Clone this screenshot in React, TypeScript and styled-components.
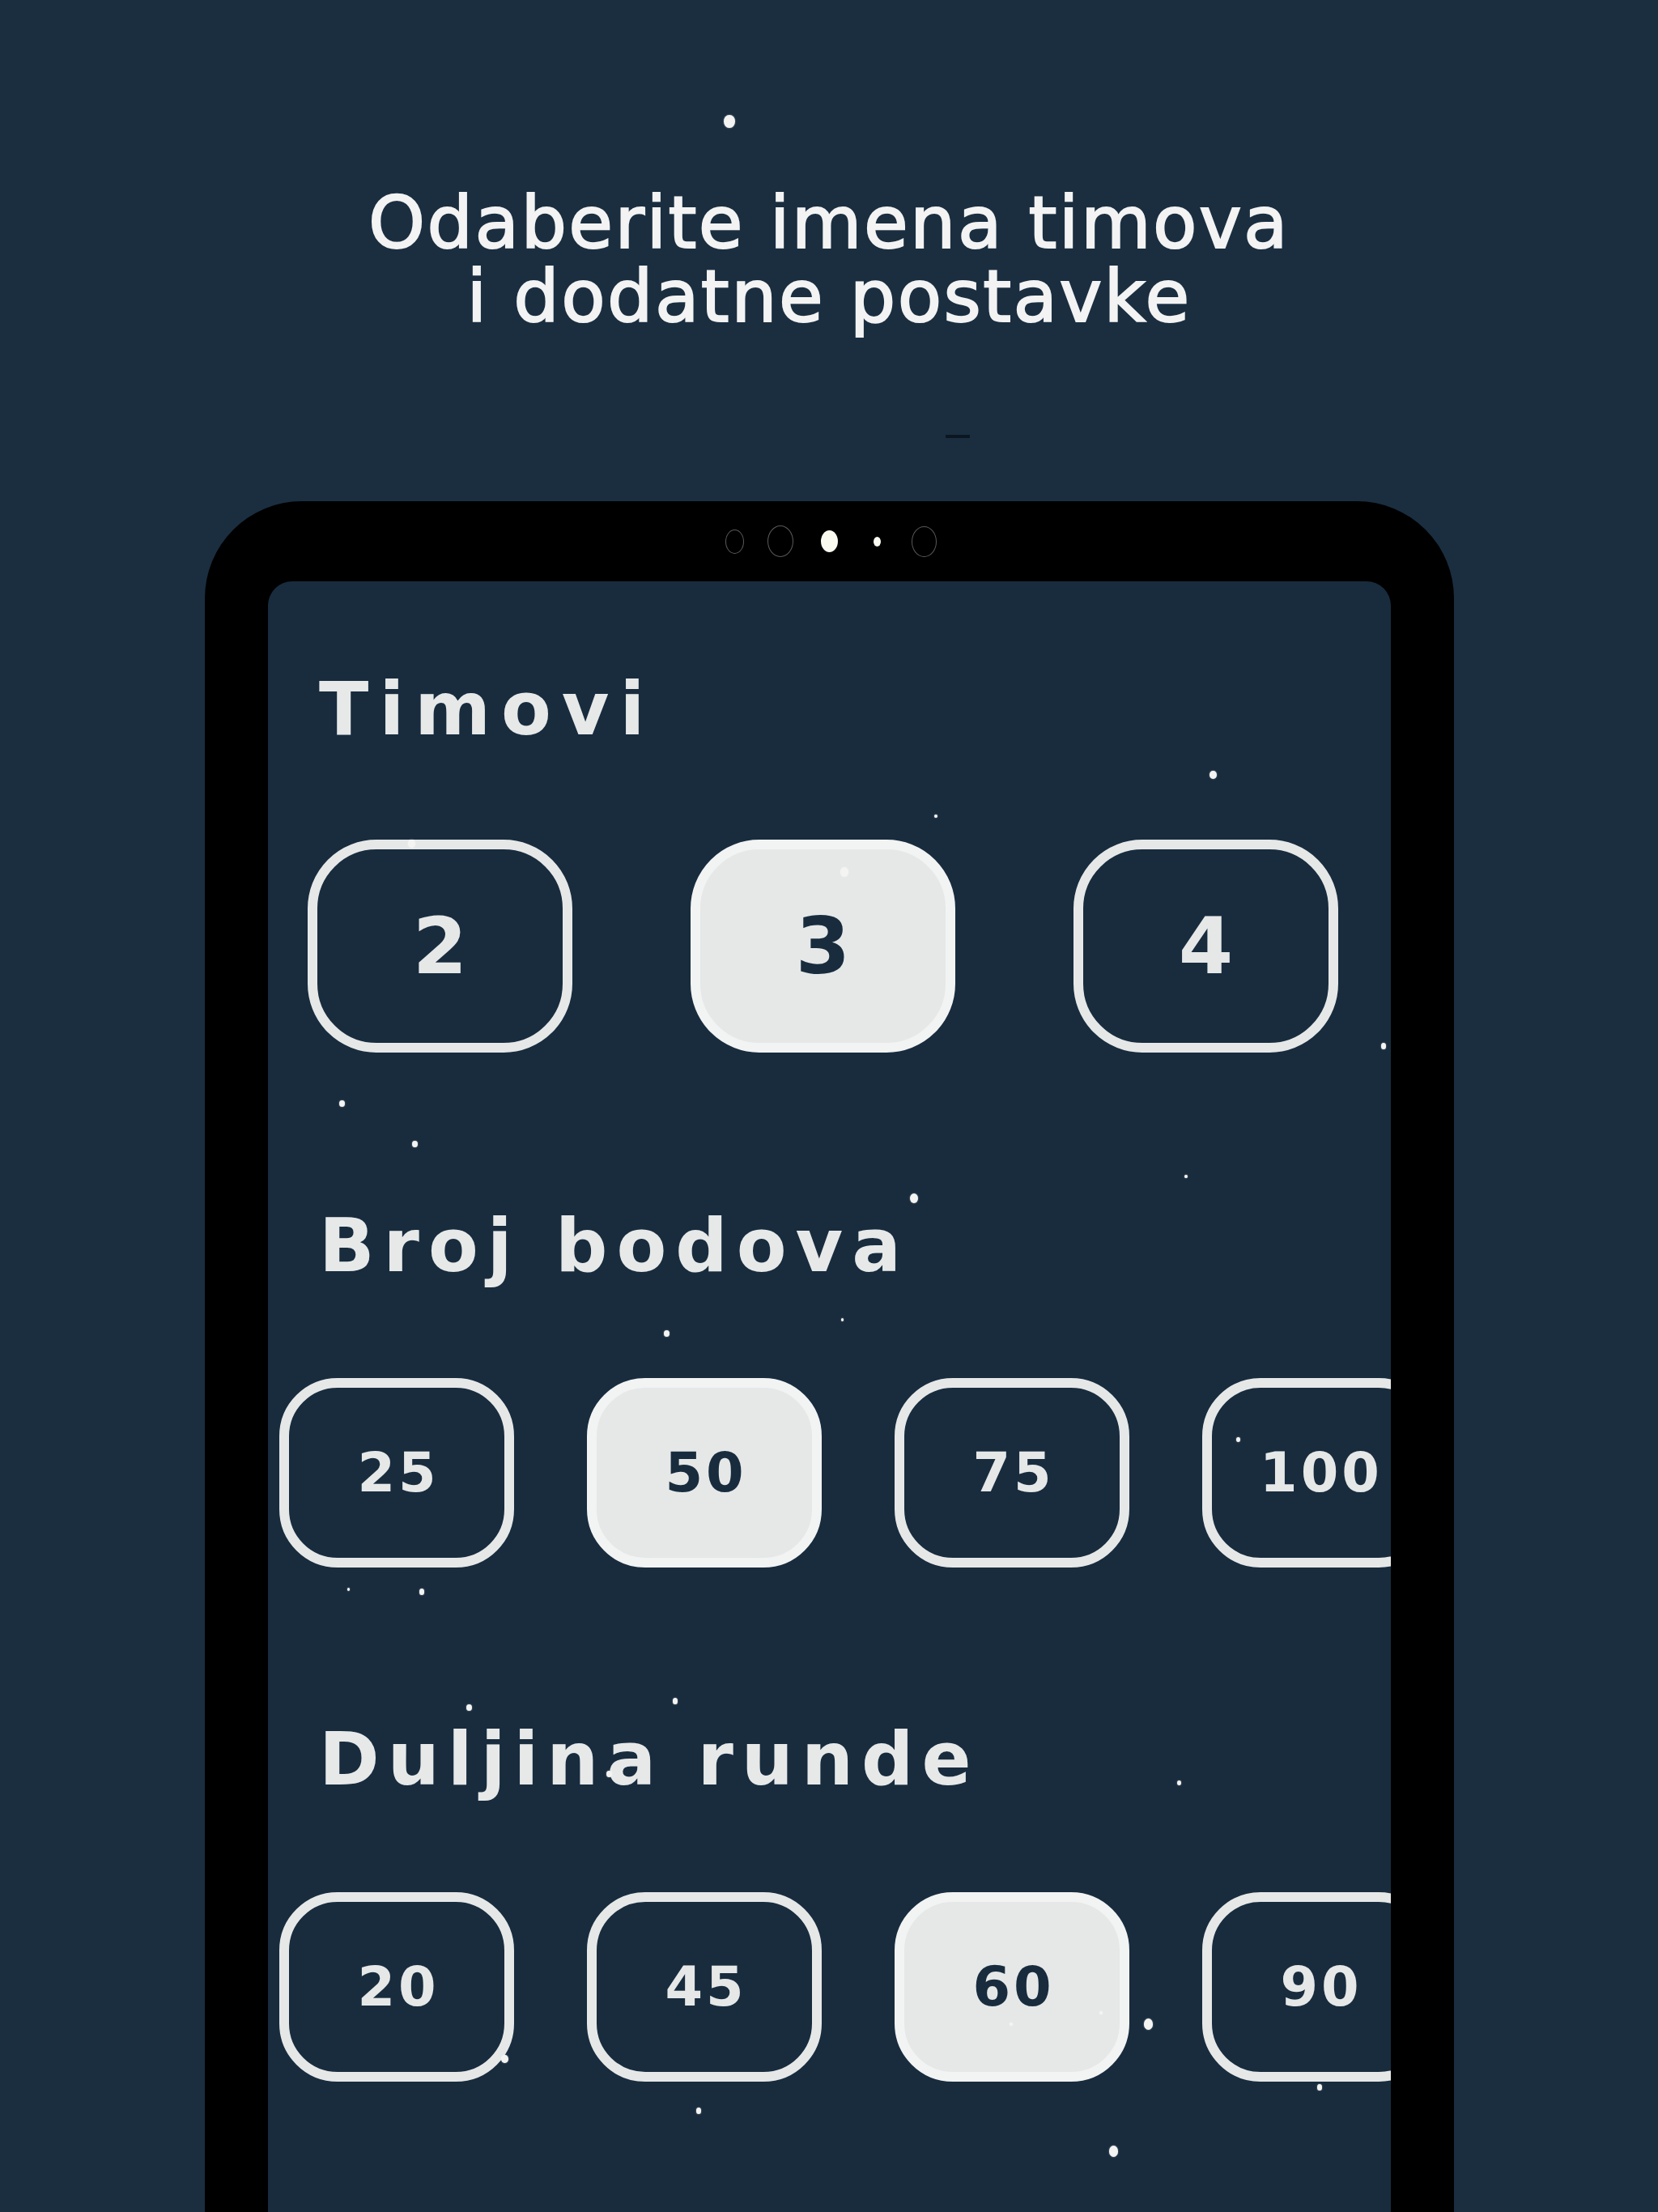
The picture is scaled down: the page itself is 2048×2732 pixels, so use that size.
import React from "react";
import styled, { createGlobalStyle } from "styled-components";

const GlobalStyle = createGlobalStyle`
  html, body { margin: 0; padding: 0; background: #1a2e40; }
  #root { width: 2048px; }
`;

const Page = styled.div`
  position: relative;
  width: 2048px;
  height: 2732px;
  overflow: hidden;
  background: #1a2e40;
  display: flex;
  flex-direction: column;
  padding-top: 230px;
  box-sizing: border-box;
`;

const Title = styled.h1`
  margin: 0;
  width: 100%;
  text-align: center;
  font-family: "DejaVu Sans", Verdana, sans-serif;
  font-weight: 400;
  font-size: 89px;
  line-height: 91px;
  letter-spacing: 2.4px;
  color: #f3f3f3;
  -webkit-text-stroke: 2px #f3f3f3;
`;

const Phone = styled.div`
  margin: 207px 0 0 253px;
  width: 1543px;
  flex: 1;
  background: #000;
  border-radius: 120px 120px 0 0;
  padding: 0 78px;
  box-sizing: border-box;
  display: flex;
  flex-direction: column;
`;

const Bezel = styled.div`
  height: 99px;
  flex-shrink: 0;
  display: flex;
  align-items: center;
  justify-content: center;
  padding-left: 4px;
`;

const Lens = styled.span<{ $w: number; $h: number; $ml: number; $filled?: boolean }>`
  display: block;
  margin-left: ${(p) => p.$ml}px;
  width: ${(p) => p.$w}px;
  height: ${(p) => p.$h}px;
  border-radius: 50%;
  box-sizing: border-box;
  background: ${(p) => (p.$filled ? "#fbfaf0" : "transparent")};
  border: ${(p) => (p.$filled ? "none" : "1.5px solid #5a5a5a")};
`;

const Screen = styled.div`
  flex: 1;
  background: #182c3e;
  border-radius: 30px 30px 0 0;
  overflow: hidden;
  display: flex;
  flex-direction: column;
  padding-top: 113px;
`;

const Heading = styled.h2<{ $gap: number; $ls: number }>`
  margin: ${(p) => p.$gap}px 0 0 63px;
  font-family: "DejaVu Sans", Verdana, sans-serif;
  font-weight: 700;
  font-size: 90px;
  line-height: 90px;
  letter-spacing: ${(p) => p.$ls}px;
  color: #e7e9e9;
`;

const Row = styled.div<{ $left: number; $gap: number; $top: number }>`
  margin-top: ${(p) => p.$top}px;
  padding-left: ${(p) => p.$left}px;
  display: flex;
  gap: ${(p) => p.$gap}px;
`;

const Choice = styled.div<{
  $w: number;
  $h: number;
  $r: number;
  $size: number;
  $ls: number;
  $active?: boolean;
}>`
  flex-shrink: 0;
  width: ${(p) => p.$w}px;
  height: ${(p) => p.$h}px;
  border-radius: ${(p) => p.$r}px;
  box-sizing: border-box;
  border: 12px solid ${(p) => (p.$active ? "#f2f3f3" : "#e6e8e8")};
  background: ${(p) => (p.$active ? "#e6e8e8" : "transparent")};
  color: ${(p) => (p.$active ? "#182c3e" : "#e6e8e8")};
  display: flex;
  align-items: center;
  justify-content: center;
  font-family: "DejaVu Sans", Verdana, sans-serif;
  font-weight: 700;
  font-size: ${(p) => p.$size}px;
  letter-spacing: ${(p) => p.$ls}px;
  padding-left: ${(p) => p.$ls}px;
`;

const Speck = styled.span.attrs<{ $x: number; $y: number; $s: number }>((p) => ({
  style: {
    left: `${p.$x - p.$s / 2}px`,
    top: `${p.$y - p.$s * 0.6}px`,
    width: `${p.$s}px`,
    height: `${p.$s * 1.2}px`,
  },
}))<{ $x: number; $y: number; $s: number }>`
  position: absolute;
  border-radius: 50%;
  background: #f4f4f2;
  box-shadow: 0 0 2px rgba(255, 255, 255, 0.5);
`;

const Dash = styled.span`
  position: absolute;
  left: 1168px;
  top: 537px;
  width: 30px;
  height: 4px;
  background: #0b1620;
`;

const specks: [number, number, number][] = [
  [901, 150, 14],
  [1498, 957, 9],
  [1156, 1008, 4],
  [508, 1042, 9],
  [1043, 1077, 10],
  [1709, 1292, 6],
  [422, 1363, 7],
  [512, 1413, 7],
  [1465, 1453, 4],
  [1129, 1480, 10],
  [823, 1647, 7],
  [1040, 1630, 3],
  [1529, 1778, 5],
  [430, 1963, 3],
  [521, 1966, 6],
  [579, 2109, 7],
  [834, 2101, 6],
  [1456, 2202, 5],
  [752, 2191, 7],
  [623, 2543, 9],
  [1418, 2500, 11],
  [1249, 2500, 4],
  [1360, 2486, 4],
  [1630, 2578, 6],
  [863, 2607, 6],
  [1375, 2657, 11],
];

type Group = {
  title: string;
  gap: number;
  ls: number;
  rowTop: number;
  options: string[];
  active: number;
  big?: boolean;
};

const groups: Group[] = [
  { title: "Timovi", gap: 0, ls: 13, rowTop: 116, options: ["2", "3", "4"], active: 1, big: true },
  { title: "Broj bodova", gap: 194, ls: 11, rowTop: 118, options: ["25", "50", "75", "100"], active: 1 },
  { title: "Duljina runde", gap: 192, ls: 10, rowTop: 119, options: ["20", "45", "60", "90"], active: 2 },
];

const lenses = [
  { w: 23, h: 30, ml: 0 },
  { w: 32, h: 39, ml: 29 },
  { w: 21, h: 27, ml: 34, filled: true },
  { w: 9, h: 12, ml: 44, filled: true },
  { w: 31, h: 38, ml: 38 },
];

export default function App() {
  return (
    <>
      <GlobalStyle />
      <Page>
        <Title>
          Odaberite imena timova
          <br />i dodatne postavke
        </Title>
        <Phone>
          <Bezel>
            {lenses.map((l, i) => (
              <Lens key={i} $w={l.w} $h={l.h} $ml={l.ml} $filled={l.filled} />
            ))}
          </Bezel>
          <Screen>
            {groups.map((g) => (
              <React.Fragment key={g.title}>
                <Heading $gap={g.gap} $ls={g.ls}>
                  {g.title}
                </Heading>
                <Row $left={g.big ? 49 : 14} $gap={g.big ? 146 : 90} $top={g.rowTop}>
                  {g.options.map((o, i) => (
                    <Choice
                      key={o}
                      $w={g.big ? 327 : 290}
                      $h={g.big ? 263 : 234}
                      $r={g.big ? 85 : 72}
                      $size={g.big ? 97 : 67}
                      $ls={g.big ? 0 : 4}
                      $active={i === g.active}
                    >
                      {o}
                    </Choice>
                  ))}
                </Row>
              </React.Fragment>
            ))}
          </Screen>
        </Phone>
        <Dash />
        {specks.map(([x, y, s], i) => (
          <Speck key={i} $x={x} $y={y} $s={s} />
        ))}
      </Page>
    </>
  );
}
